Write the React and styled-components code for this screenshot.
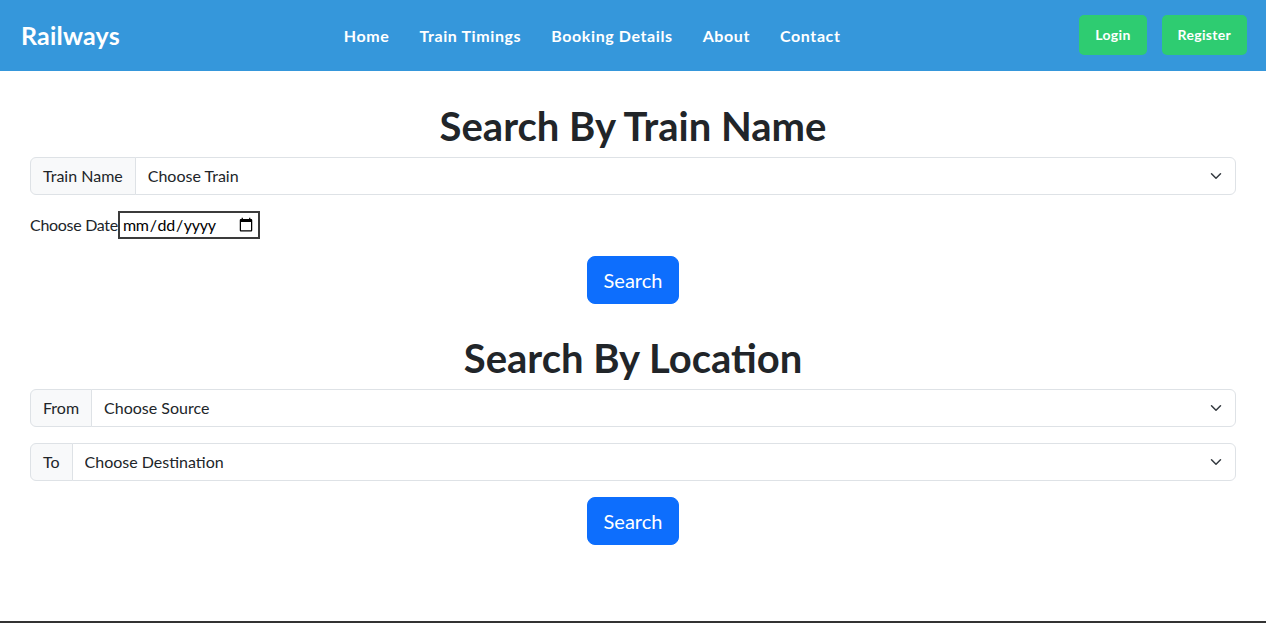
import React from "react";
import styled, { createGlobalStyle } from "styled-components";

const GlobalStyle = createGlobalStyle`
  *, *::before, *::after {
    box-sizing: border-box;
  }
  body {
    margin: 0;
    font-family: Lato, "Open Sans", "Liberation Sans", sans-serif;
    font-size: 16px;
    line-height: 1.5;
    color: #212529;
    background: #fff;
  }
`;

const NavBar = styled.header`
  height: 71px;
  background-color: #3597db;
  display: flex;
  align-items: center;
  justify-content: space-between;
  padding: 0 19px 0 21px;
`;

const Logo = styled.div`
  color: #fff;
  font-size: 25px;
  font-weight: 700;
  letter-spacing: 0.2px;
`;

const NavLinks = styled.nav`
  display: flex;
`;

const NavLink = styled.a`
  color: #fff;
  font-size: 16px;
  font-weight: 700;
  letter-spacing: 0.6px;
  padding: 0 15px;
  text-decoration: none;
`;

const Actions = styled.div`
  display: flex;
  gap: 15px;
  margin-left: 15px;
`;

const NavButton = styled.button`
  background-color: #2ecc71;
  color: #fff;
  border: none;
  border-radius: 5px;
  padding: 10px 16px;
  margin-top: -2px;
  font-family: inherit;
  font-size: 14px;
  font-weight: 700;
  letter-spacing: 0.3px;
  line-height: 20px;
`;

const Main = styled.main`
  min-height: 550px;
  padding: 31px 30px 0;
`;

const Heading = styled.h1`
  margin: ${(p) => (p.$first ? "0" : "30px")} 0 7px;
  text-align: center;
  font-size: 40px;
  font-weight: 700;
  line-height: 1.2;
`;

const InputGroup = styled.div`
  display: flex;
  margin-bottom: 16px;
`;

const GroupLabel = styled.span`
  display: flex;
  align-items: center;
  padding: 6px 12px;
  background-color: #f8f9fa;
  border: 1px solid #dee2e6;
  border-radius: 6px 0 0 6px;
  white-space: nowrap;
`;

const SelectWrap = styled.div`
  position: relative;
  flex: 1;
  margin-left: -1px;
`;

const Select = styled.select`
  width: 100%;
  appearance: none;
  padding: 6px 36px 6px 12px;
  font-family: inherit;
  font-size: 16px;
  line-height: 1.5;
  color: #212529;
  background-color: #fff;
  border: 1px solid #dee2e6;
  border-radius: 0 6px 6px 0;
`;

const Chevron = styled.svg`
  position: absolute;
  right: 12px;
  top: 13px;
  pointer-events: none;
`;

const DateRow = styled.div`
  margin-bottom: 17px;
`;

const DateLabel = styled.label`
  letter-spacing: -0.3px;
`;

const DateInput = styled.input`
  font-family: inherit;
  font-size: 16px;
  line-height: 20px;
  letter-spacing: -0.3px;
  padding: 1px 2px;
  border: 2px solid #3b3b3b;
  width: 142px;
`;

const Center = styled.div`
  display: flex;
  justify-content: center;
`;

const SearchButton = styled.button`
  background-color: #0d6efd;
  color: #fff;
  border: 1px solid #0d6efd;
  border-radius: 8px;
  padding: 8px 16px;
  font-family: inherit;
  font-size: 20px;
  line-height: 1.5;
`;

const Footer = styled.footer`
  height: 60px;
  background-color: #333;
`;

const ChooseSelect = ({ label, placeholder }) => (
  <InputGroup>
    <GroupLabel>{label}</GroupLabel>
    <SelectWrap>
      <Select defaultValue="">
        <option value="">{placeholder}</option>
      </Select>
      <Chevron width="16" height="12" viewBox="0 0 16 16">
        <path
          d="m2 5 6 6 6-6"
          fill="none"
          stroke="#343a40"
          strokeWidth="2"
          strokeLinecap="round"
          strokeLinejoin="round"
        />
      </Chevron>
    </SelectWrap>
  </InputGroup>
);

const App = () => {
  return (
    <>
      <GlobalStyle />
      <NavBar>
        <Logo>Railways</Logo>
        <NavLinks>
          <NavLink href="#">Home</NavLink>
          <NavLink href="#">Train Timings</NavLink>
          <NavLink href="#">Booking Details</NavLink>
          <NavLink href="#">About</NavLink>
          <NavLink href="#">Contact</NavLink>
        </NavLinks>
        <Actions>
          <NavButton>Login</NavButton>
          <NavButton>Register</NavButton>
        </Actions>
      </NavBar>
      <Main>
        <Heading $first>Search By Train Name</Heading>
        <ChooseSelect label="Train Name" placeholder="Choose Train" />
        <DateRow>
          <DateLabel htmlFor="date">Choose Date</DateLabel>
          <DateInput id="date" type="date" />
        </DateRow>
        <Center>
          <SearchButton>Search</SearchButton>
        </Center>
        <Heading>Search By Location</Heading>
        <ChooseSelect label="From" placeholder="Choose Source" />
        <ChooseSelect label="To" placeholder="Choose Destination" />
        <Center>
          <SearchButton>Search</SearchButton>
        </Center>
      </Main>
      <Footer />
    </>
  );
};

export default App;
